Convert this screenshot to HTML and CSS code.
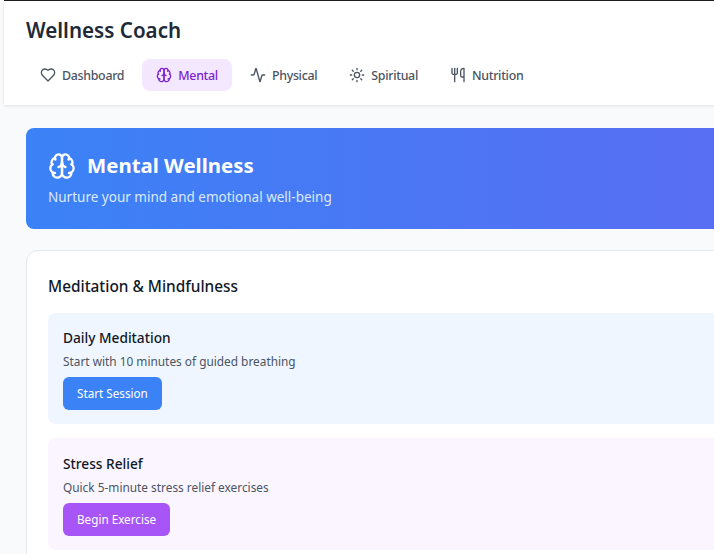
FILE: index.html
```html
<!DOCTYPE html>
<html lang="en">
<head>
  <meta charset="UTF-8" />
  <meta name="viewport" content="width=device-width, initial-scale=1" />
  <title>Wellness Coach</title>
  <link rel="stylesheet" href="styles.css">
</head>
<body>
  <div class="app">
    <header class="header">
      <h1 class="brand">Wellness Coach</h1>
      <nav class="nav">
        <a class="nav-item">
          <svg class="icon" viewBox="0 0 24 24"><path d="M19 14c1.49-1.46 3-3.21 3-5.5A5.5 5.5 0 0 0 16.5 3c-1.76 0-3 .5-4.5 2-1.5-1.5-2.74-2-4.5-2A5.5 5.5 0 0 0 2 8.5c0 2.3 1.5 4.05 3 5.5l7 7Z"/></svg>
          Dashboard
        </a>
        <a class="nav-item active">
          <svg class="icon" viewBox="0 0 24 24"><use href="#brain"/></svg>
          Mental
        </a>
        <a class="nav-item">
          <svg class="icon" viewBox="0 0 24 24"><path d="M22 12h-2.48a2 2 0 0 0-1.93 1.46l-2.35 8.36a.25.25 0 0 1-.48 0L9.24 2.18a.25.25 0 0 0-.48 0l-2.35 8.36A2 2 0 0 1 4.49 12H2"/></svg>
          Physical
        </a>
        <a class="nav-item">
          <svg class="icon" viewBox="0 0 24 24"><circle cx="12" cy="12" r="4"/><path d="M12 2v2M12 20v2M4.93 4.93l1.41 1.41M17.66 17.66l1.41 1.41M2 12h2M20 12h2M6.34 17.66l-1.41 1.41M19.07 4.93l-1.41 1.41"/></svg>
          Spiritual
        </a>
        <a class="nav-item">
          <svg class="icon" viewBox="0 0 24 24"><path d="M3 2v7c0 1.1.9 2 2 2h4a2 2 0 0 0 2-2V2"/><path d="M7 2v20"/><path d="M21 15V2a5 5 0 0 0-5 5v6c0 1.1.9 2 2 2h3Zm0 0v7"/></svg>
          Nutrition
        </a>
      </nav>
    </header>

    <main class="main">
      <section class="hero">
        <div class="hero-title">
          <svg class="hero-icon" viewBox="0 0 24 24">
            <!-- shared with the nav item -->
            <g id="brain">
              <path d="M12 5a3 3 0 1 0-5.997.125 4 4 0 0 0-2.526 5.77 4 4 0 0 0 .556 6.588A4 4 0 1 0 12 18Z"/>
              <path d="M12 5a3 3 0 1 1 5.997.125 4 4 0 0 1 2.526 5.77 4 4 0 0 1-.556 6.588A4 4 0 1 1 12 18Z"/>
              <path d="M15 13a4.5 4.5 0 0 1-3-4 4.5 4.5 0 0 1-3 4"/>
              <path d="M17.599 6.5a3 3 0 0 0 .399-1.375"/>
              <path d="M6.003 5.125A3 3 0 0 0 6.401 6.5"/>
              <path d="M3.477 10.896a4 4 0 0 1 .585-.396"/>
              <path d="M19.938 10.5a4 4 0 0 1 .585.396"/>
              <path d="M6 18a4 4 0 0 1-1.967-.516"/>
              <path d="M19.967 17.484A4 4 0 0 1 18 18"/>
            </g>
          </svg>
          <h2>Mental Wellness</h2>
        </div>
        <p>Nurture your mind and emotional well-being</p>
      </section>

      <section class="card">
        <h3 class="card-title">Meditation &amp; Mindfulness</h3>
        <div class="activity activity-blue">
          <h4>Daily Meditation</h4>
          <p>Start with 10 minutes of guided breathing</p>
          <button class="btn btn-blue">Start Session</button>
        </div>
        <div class="activity activity-purple">
          <h4>Stress Relief</h4>
          <p>Quick 5-minute stress relief exercises</p>
          <button class="btn btn-purple">Begin Exercise</button>
        </div>
      </section>
    </main>
  </div>
</body>
</html>
```

FILE: styles.css
```css
* {
  box-sizing: border-box;
}

html, body {
  height: 100%;
  overflow: hidden;
}

body {
  margin: 0;
  background-color: #f9fafb;
  font-family: "Noto Sans", "Liberation Sans", sans-serif;
  color: #111827;
}

.app {
  width: 1000px;
  margin-left: 4px;
  border-top: 1px solid #1f1f1f;
}

.header {
  background: #fff;
  padding: 14px 22px 14px;
  box-shadow: 0 1px 3px rgba(0,0,0,0.1);
}

.brand {
  margin: 0 0 14px;
  font-size: 20.6px;
  line-height: 30px;
  font-weight: 600;
  color: #1f2937;
}

.nav {
  display: flex;
  gap: 4px;
}

.nav-item {
  display: flex;
  align-items: center;
  gap: 6px;
  height: 32px;
  padding: 0 14px;
  border-radius: 8px;
  font-size: 12.4px;
  letter-spacing: -0.3px;
  font-weight: 500;
  color: #4b5563;
}

.nav-item.active {
  background: #f3e8ff;
  color: #7e22ce;
}

.icon, .hero-icon {
  fill: none;
  stroke: currentColor;
  stroke-width: 2;
  stroke-linecap: round;
  stroke-linejoin: round;
  flex: none;
}

.icon {
  width: 16px;
  height: 16px;
}

.main {
  padding: 23px 22px;
}

.hero {
  height: 101px;
  padding: 22px;
  border-radius: 8px;
  background: linear-gradient(to right, #3b82f6, #6366f1);
  color: #fff;
}

.hero-title {
  display: flex;
  align-items: center;
  gap: 11px;
}

.hero-icon {
  width: 28px;
  height: 28px;
}

.hero h2 {
  margin: 0;
  font-size: 20.4px;
  line-height: 31px;
  font-weight: 700;
}

.hero p {
  margin: 6px 0 0;
  font-size: 13.5px;
  line-height: 20px;
  color: #dbeafe;
}

.card {
  margin-top: 21px;
  padding: 25px 21px;
  background: #fff;
  border: 1px solid #e5e7eb;
  border-radius: 12px;
}

.card-title {
  margin: 0 0 15px;
  font-size: 15.4px;
  line-height: 22px;
  font-weight: 500;
}

.activity {
  height: 111px;
  padding: 15px;
  margin-bottom: 14px;
  border-radius: 8px;
}

.activity-blue {
  background: #eff6ff;
}

.activity-purple {
  height: 112px;
  padding-top: 16px;
  background: #faf5ff;
}

.activity h4 {
  margin: 0 0 3px;
  font-size: 13.7px;
  line-height: 20px;
  font-weight: 500;
}

.activity p {
  margin: 0 0 6px;
  font-size: 11.85px;
  line-height: 20px;
  color: #4b5563;
}

.btn {
  display: block;
  height: 33px;
  padding: 0 14px 2px;
  border: 0;
  border-radius: 6px;
  font-family: inherit;
  font-size: 11.7px;
  color: #fff;
}

.btn-blue {
  background: #3b82f6;
}

.btn-purple {
  background: #a855f7;
}
```
